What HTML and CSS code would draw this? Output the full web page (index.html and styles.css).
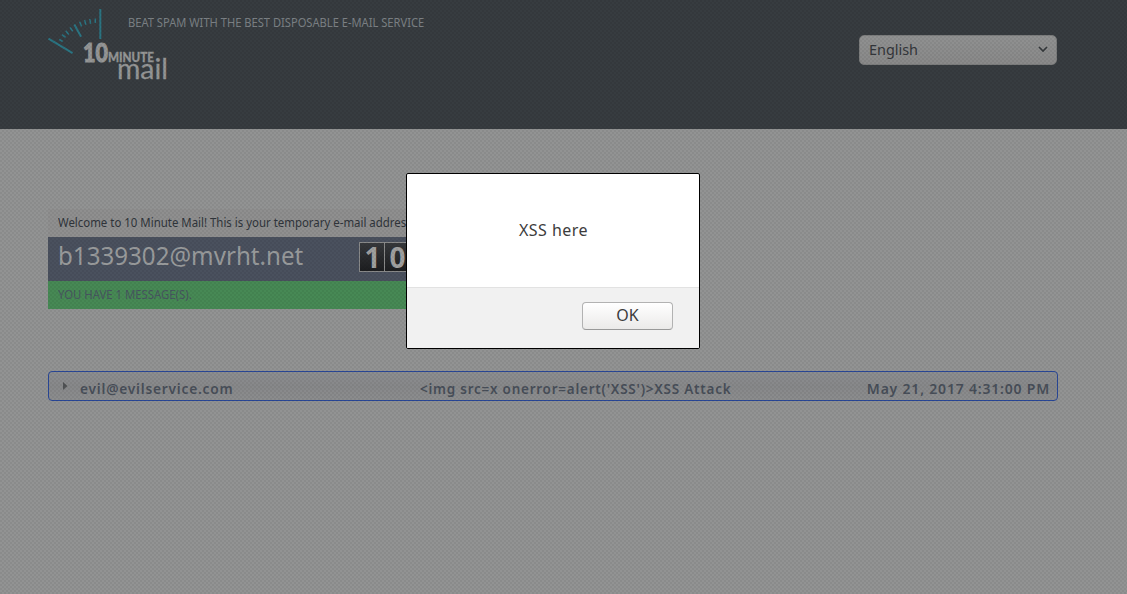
FILE: index.html
```
<!DOCTYPE html>
<html lang="en">
<head>
<meta charset="utf-8">
<title>10 Minute Mail</title>
<link rel="stylesheet" href="styles.css">
</head>
<body>
<header class="header">
  <svg class="logo" width="124" height="88" viewBox="0 0 124 88" role="img" aria-label="10 Minute Mail">
    <g class="dial">
      <path stroke-width="2" d="M52.3 9v30M.5 38.6 24.6 53.2M26.3 24.5l6.8 12.3"/>
      <path stroke-width="1.5" d="M11.2 39.3l3.4 2.2M14 34.6l3.6 2.8M17.8 30.8l3 3.6M22 27.4l2.7 3.8M31.6 21.8l2 4.6M36.6 20l1.3 4.7M41.8 19l.8 4.8M47.3 18.4v4.6"/>
    </g>
    <text class="logo-ten" x="35" y="62" textLength="25" lengthAdjust="spacingAndGlyphs">10</text>
    <text class="logo-minute" x="60" y="62" textLength="46" lengthAdjust="spacingAndGlyphs">MINUTE</text>
    <text class="logo-mail" x="69" y="78.5" textLength="51" lengthAdjust="spacingAndGlyphs">mail</text>
  </svg>
  <p class="tagline"><span class="narrow">BEAT SPAM WITH THE BEST DISPOSABLE E-MAIL SERVICE</span></p>
  <div class="language"><span class="narrow">English</span>
    <svg width="10" height="7" viewBox="0 0 10 7"><path d="M1 1l4 4 4-4"/></svg>
  </div>
</header>
<main class="content">
  <section class="mailbox">
    <p class="welcome"><span class="narrow">Welcome to 10 Minute Mail! This is your temporary e-mail address:</span></p>
    <div class="address-bar">
      <span class="address"><span class="narrow">b1339302@mvrht.net</span></span>
      <div class="counter"><span>1</span><span>0</span></div>
    </div>
    <p class="count"><span class="narrow">YOU HAVE 1 MESSAGE(S).</span></p>
  </section>
  <section class="message">
    <svg class="arrow" width="5" height="8" viewBox="0 0 5 8"><path d="M0 0l4.5 4L0 8z"/></svg>
    <span class="sender"><span class="narrow">evil@evilservice.com</span></span>
    <span class="subject"><span class="narrow">&lt;img src=x onerror=alert('XSS')&gt;XSS Attack</span></span>
    <span class="date">May 21, 2017 4:31:00 PM</span>
  </section>
</main>
<div class="shade"></div>
<div class="dialog" role="alertdialog">
  <p class="dialog-text">XSS here</p>
  <div class="dialog-actions"><button class="ok">OK</button></div>
</div>
</body>
</html>
```
FILE: styles.css
```
* { box-sizing: border-box; }
body { margin: 0; height: 594px; overflow: hidden; background: #929393; font-family: "Noto Sans", sans-serif; color: #30353b; }
p { margin: 0; }
.narrow { display: inline-block; transform-origin: 0 50%; }
.header { display: flex; align-items: flex-start; height: 129px; padding: 0 70px 0 48px; background: #373c40; }
.logo { width: 124px; height: 88px; margin-right: -44px; flex: none; overflow: visible; }
.dial { fill: none; stroke: #2b7583; }
.logo text { fill: #959696; stroke: #959696; font-family: Lato, sans-serif; }
.logo .logo-ten { font-size: 26px; font-weight: 900; stroke-width: 1; }
.logo .logo-minute { font-size: 12.5px; font-weight: 900; stroke-width: .3; }
.logo .logo-mail { font-size: 29px; stroke-width: .3; }
.tagline { margin-top: 13px; font-size: 12px; line-height: 20px; color: #7c8185; white-space: nowrap; }
.tagline .narrow { transform: scaleX(.928); }
.language { display: flex; align-items: center; justify-content: space-between; width: 198px; height: 30px; margin: 35px 0 0 auto; padding: 0 8px 2px 9px; border: 1px solid #7c7d7d; border-radius: 5px; background: linear-gradient(#909191, #898989); font-size: 15px; color: #33363a; }
.language .narrow { transform: scaleX(.96); }
.language svg { fill: none; stroke: #363a3d; stroke-width: 1.7; }
.content { padding: 80px 69px 0 48px; }
.mailbox { width: 620px; }
.welcome { height: 28px; padding-left: 10px; font-size: 12px; line-height: 28px; background: #8f8f8f; white-space: nowrap; }
.welcome .narrow { transform: scaleX(.952); }
.address-bar { display: flex; height: 44px; padding: 0 10px; background: #4a515e; }
.address { width: 301px; font-size: 25px; line-height: 37px; color: #999b9c; white-space: nowrap; }
.address .narrow { transform: scaleX(.965); }
.counter { display: flex; width: 51px; height: 30px; margin-top: 5px; border: 1px solid #898a8a; background: linear-gradient(#37393c, #1d1e20); }
.counter span { flex: 1; padding-left: 1px; font: bold 28px/29px "Noto Sans", sans-serif; text-align: center; color: #a0a0a0; }
.counter span + span { border-left: 1px solid #898a8a; }
.count { height: 28px; padding-left: 10px; background: #478955; font-size: 12px; line-height: 28px; color: #475660; }
.count .narrow { transform: scaleX(.945); }
.message { display: flex; align-items: center; height: 30px; margin-top: 62px; padding: 4px 7px 0 14px; border: 1px solid #294797; border-radius: 4px; background: linear-gradient(#8c8e90, #87888a 50%, #8c8d8e); font-size: 14px; font-weight: 600; letter-spacing: .8px; color: #484f59; white-space: nowrap; }
.arrow { margin: -5px 12px 0 0; fill: #515355; }
.sender { width: 340px; }
.sender .narrow { transform: scaleX(.98); }
.subject .narrow { transform: scaleX(.962); }
.date { margin-left: auto; }
.shade { position: fixed; inset: 0; pointer-events: none; background: radial-gradient(circle at 1px 1px, #0000000d 0 .8px, #0000 1.3px) 0 0 / 4px 4px, radial-gradient(circle at 3px 3px, #0000000d 0 .8px, #0000 1.3px) 0 0 / 4px 4px; }
.dialog { position: fixed; left: 406px; top: 173px; width: 294px; height: 176px; border: 1px solid #000; border-radius: 2px; background: #fff; overflow: hidden; }
.dialog-text { height: 113px; padding-left: 1px; font-size: 16px; line-height: 113px; letter-spacing: .45px; text-align: center; color: #3c3c3c; }
.dialog-actions { display: flex; justify-content: flex-end; height: 61px; padding: 14px 26px 0; border-top: 1px solid #e2e2e2; background: #f1f1f1; }
.ok { width: 91px; height: 28px; padding: 0 0 2px; border: 1px solid #b2b2b2; border-bottom-color: #999; border-radius: 4px; background: linear-gradient(#fff, #ebeae9); font: 16px/24px "Noto Sans", sans-serif; color: #3c3c3c; }
```
